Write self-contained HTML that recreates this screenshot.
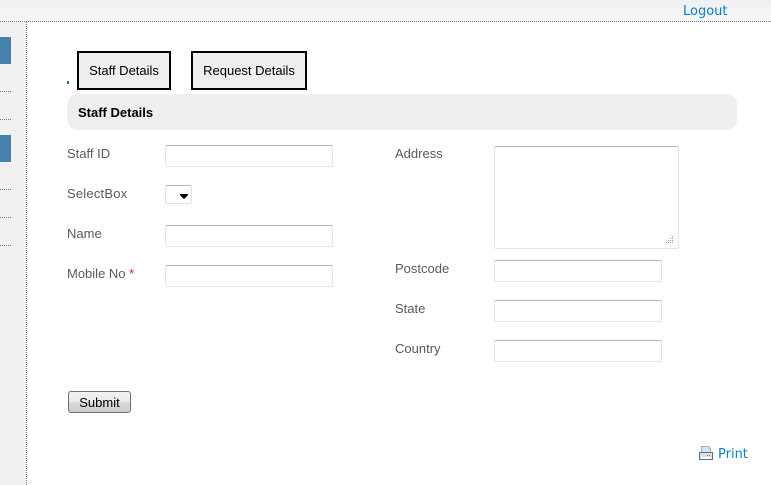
<!DOCTYPE html>
<html>
<head>
<meta charset="utf-8">
<title>Staff Details</title>
<style>
html,body{margin:0;padding:0;background:#fff;}
body{position:relative;width:771px;height:485px;overflow:hidden;font-family:"Liberation Sans",Arial,sans-serif;font-size:13px;color:#000;}
.a{position:absolute;box-sizing:border-box;}
.top{left:0;top:0;width:771px;height:21px;background:linear-gradient(to bottom,#f0f0f3,#f7f6f7);}
.hd{left:0;top:21px;width:771px;height:1px;background:repeating-linear-gradient(to right,#777 0,#777 1px,#fff 1px,#fff 2px);}
.side{left:0;top:22px;width:26px;height:463px;background:#f1f1f1;}
.vd{left:26px;top:22px;width:1px;height:463px;background:repeating-linear-gradient(to bottom,#777 0,#777 1px,#fff 1px,#fff 2px);}
.blue{left:0;width:11px;height:27px;background:#4682ae;}
.sd{left:0;width:11px;height:1px;background:repeating-linear-gradient(to right,#777 0,#777 1px,transparent 1px,transparent 2px);}
.tab{top:51px;height:39px;border:2px solid #000;background:#eee;text-align:center;line-height:35px;font-size:13px;color:#000;white-space:nowrap;}
.head{left:67px;top:94px;width:670px;height:36px;background:#eee;border-radius:11px;font-weight:bold;line-height:37px;padding-left:11px;font-size:13px;color:#000;}
.l{font-size:13px;line-height:15px;color:#555a63;white-space:nowrap;}
.i{background:#fff;border:1px solid #e2e4ea;border-top-color:#b4b4ba;border-radius:2px;}
.link{font-family:"DejaVu Sans",Verdana,sans-serif;color:#0a7fd0;font-size:13px;line-height:15px;white-space:nowrap;}
</style>
</head>
<body>
<div class="a top"></div>
<div class="a hd"></div>
<div class="a side"></div>
<div class="a vd"></div>
<div class="a blue" style="top:37px"></div>
<div class="a sd" style="top:91px"></div>
<div class="a sd" style="top:119px"></div>
<div class="a blue" style="top:135px"></div>
<div class="a sd" style="top:189px"></div>
<div class="a sd" style="top:217px"></div>
<div class="a sd" style="top:245px"></div>

<div class="a link" style="left:683px;top:4px">Logout</div>

<div class="a" style="left:67px;top:81px;width:2px;height:3px;background:#2a6fa8"></div>
<div class="a tab" style="left:77px;width:94px">Staff Details</div>
<div class="a tab" style="left:191px;width:116px">Request Details</div>
<div class="a head">Staff Details</div>

<div class="a l" style="left:67px;top:146px">Staff ID</div>
<div class="a i" style="left:165px;top:145px;width:168px;height:22px"></div>
<div class="a l" style="left:67px;top:186px;letter-spacing:.2px">SelectBox</div>
<div class="a i" style="left:165px;top:185px;width:27px;height:19px"></div>
<svg class="a" style="left:180px;top:194px" width="8" height="5"><path d="M0 0H8V1L5 4.5H3L0 1Z" fill="#000"/></svg>
<div class="a l" style="left:67px;top:226px">Name</div>
<div class="a i" style="left:165px;top:225px;width:168px;height:22px"></div>
<div class="a l" style="left:67px;top:266px">Mobile No <span style="color:#e02020">*</span></div>
<div class="a i" style="left:165px;top:265px;width:168px;height:22px"></div>

<div class="a l" style="left:395px;top:146px">Address</div>
<div class="a i" style="left:494px;top:146px;width:185px;height:103px"></div>
<svg class="a" style="left:666px;top:236px" width="9" height="9"><g fill="#999"><rect x="6" y="0" width="1" height="1"/><rect x="4" y="2" width="1" height="1"/><rect x="6" y="2" width="1" height="1"/><rect x="2" y="4" width="1" height="1"/><rect x="4" y="4" width="1" height="1"/><rect x="6" y="4" width="1" height="1"/><rect x="0" y="6" width="1" height="1"/><rect x="2" y="6" width="1" height="1"/><rect x="4" y="6" width="1" height="1"/><rect x="6" y="6" width="1" height="1"/></g></svg>
<div class="a l" style="left:395px;top:261px">Postcode</div>
<div class="a i" style="left:494px;top:260px;width:168px;height:22px"></div>
<div class="a l" style="left:395px;top:301px">State</div>
<div class="a i" style="left:494px;top:300px;width:168px;height:22px"></div>
<div class="a l" style="left:395px;top:341px">Country</div>
<div class="a i" style="left:494px;top:340px;width:168px;height:22px"></div>

<div class="a" style="left:68px;top:391px;width:63px;height:22px;border:1px solid #707070;border-radius:3px;background:linear-gradient(to bottom,#f2f2f2 0,#ebebeb 50%,#d8d8d8 52%,#cfcfcf 100%);text-align:center;line-height:21px;font-size:13px;color:#000;">Submit</div>

<svg class="a" style="left:699px;top:446px" width="15" height="15">
<path d="M2.5 .5H9.5L11.5 2.5V7H2.5Z" fill="#cfe6f7" stroke="#8fb4d2"/>
<path d="M.5 6.5H13.5V13.5H.5Z" fill="#dfe2e4" stroke="#5e6f80"/>
<rect x="2" y="11" width="10" height="2" fill="#fff"/>
<rect x="8" y="9" width="1" height="1" fill="#c04040"/><rect x="10" y="9" width="1" height="1" fill="#40a040"/>
</svg>
<div class="a link" style="left:718px;top:447px">Print</div>
</body>
</html>
